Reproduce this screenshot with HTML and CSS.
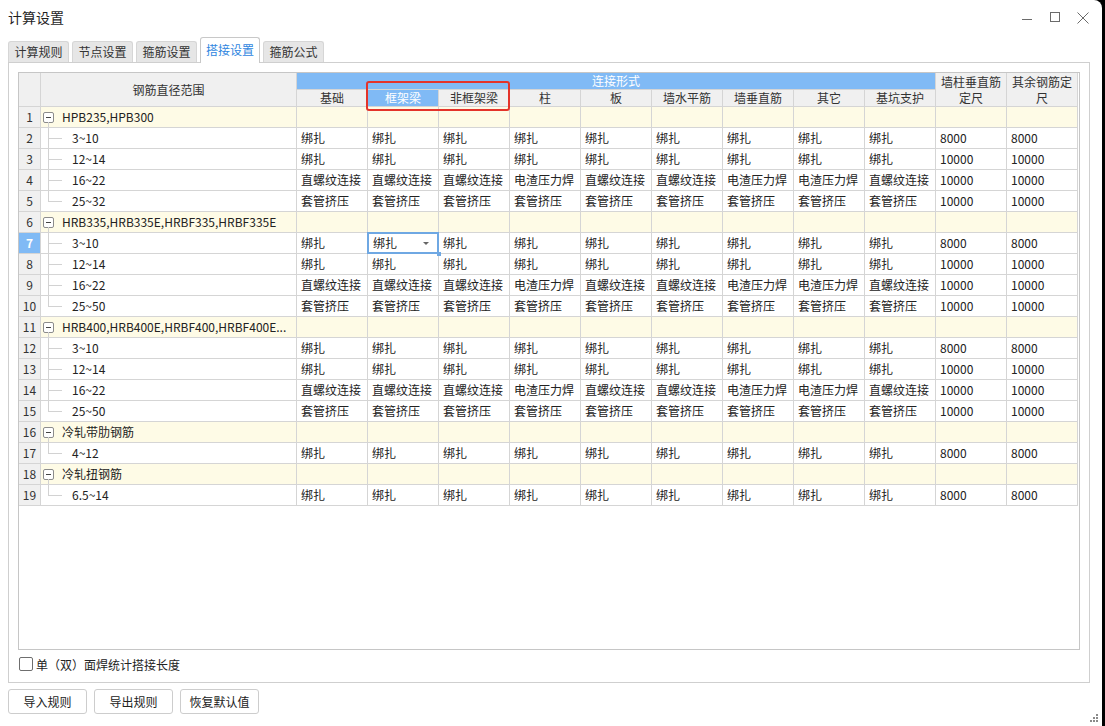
FILE: index.html
```html
<!DOCTYPE html>
<html lang="zh">
<head>
<meta charset="utf-8">
<title>计算设置</title>
<link rel="stylesheet" href="styles.css">
</head>
<body>
<div class="window">
  <div class="titlebar">
    <div class="title">计算设置</div>
    <div class="winctl">
      <svg class="ctl" width="28" height="34" viewBox="0 0 28 34"><line x1="9" y1="19.5" x2="19" y2="19.5" stroke="#6b6b6b"/></svg>
      <svg class="ctl" width="28" height="34" viewBox="0 0 28 34"><rect x="9.5" y="12.5" width="9" height="9" fill="none" stroke="#6b6b6b"/></svg>
      <svg class="ctl" width="28" height="34" viewBox="0 0 28 34"><path d="M8.5 12.5 L19.5 23.5 M19.5 12.5 L8.5 23.5" stroke="#6b6b6b" fill="none"/></svg>
    </div>
  </div>
  <div class="tabs">
    <div class="tab">计算规则</div>
    <div class="tab">节点设置</div>
    <div class="tab">箍筋设置</div>
    <div class="tab active">搭接设置</div>
    <div class="tab">箍筋公式</div>
  </div>
  <div class="panel">
    <div class="gridbox">
      <div class="sheet">
        <div class="h corner"></div>
        <div class="h range">钢筋直径范围</div>
        <div class="h blue span9">连接形式</div>
        <div class="h tall">墙柱垂直筋<br>定尺</div>
        <div class="h tall">其余钢筋定<br>尺</div>
        <div class="h sub">基础</div>
        <div class="h sub blue">框架梁</div>
        <div class="h sub">非框架梁</div>
        <div class="h sub">柱</div>
        <div class="h sub">板</div>
        <div class="h sub">墙水平筋</div>
        <div class="h sub">墙垂直筋</div>
        <div class="h sub">其它</div>
        <div class="h sub">基坑支护</div>

        <div class="row group"><div class="c n">1</div><div class="c name"><span class="tg"></span>HPB235,HPB300</div><div class="c"></div><div class="c"></div><div class="c"></div><div class="c"></div><div class="c"></div><div class="c"></div><div class="c"></div><div class="c"></div><div class="c"></div><div class="c"></div><div class="c"></div></div>
        <div class="row"><div class="c n">2</div><div class="c name child">3~10</div><div class="c">绑扎</div><div class="c">绑扎</div><div class="c">绑扎</div><div class="c">绑扎</div><div class="c">绑扎</div><div class="c">绑扎</div><div class="c">绑扎</div><div class="c">绑扎</div><div class="c">绑扎</div><div class="c">8000</div><div class="c">8000</div></div>
        <div class="row"><div class="c n">3</div><div class="c name child">12~14</div><div class="c">绑扎</div><div class="c">绑扎</div><div class="c">绑扎</div><div class="c">绑扎</div><div class="c">绑扎</div><div class="c">绑扎</div><div class="c">绑扎</div><div class="c">绑扎</div><div class="c">绑扎</div><div class="c">10000</div><div class="c">10000</div></div>
        <div class="row"><div class="c n">4</div><div class="c name child">16~22</div><div class="c">直螺纹连接</div><div class="c">直螺纹连接</div><div class="c">直螺纹连接</div><div class="c">电渣压力焊</div><div class="c">直螺纹连接</div><div class="c">直螺纹连接</div><div class="c">电渣压力焊</div><div class="c">电渣压力焊</div><div class="c">直螺纹连接</div><div class="c">10000</div><div class="c">10000</div></div>
        <div class="row"><div class="c n">5</div><div class="c name child last">25~32</div><div class="c">套管挤压</div><div class="c">套管挤压</div><div class="c">套管挤压</div><div class="c">套管挤压</div><div class="c">套管挤压</div><div class="c">套管挤压</div><div class="c">套管挤压</div><div class="c">套管挤压</div><div class="c">套管挤压</div><div class="c">10000</div><div class="c">10000</div></div>

        <div class="row group"><div class="c n">6</div><div class="c name"><span class="tg"></span>HRB335,HRB335E,HRBF335,HRBF335E</div><div class="c"></div><div class="c"></div><div class="c"></div><div class="c"></div><div class="c"></div><div class="c"></div><div class="c"></div><div class="c"></div><div class="c"></div><div class="c"></div><div class="c"></div></div>
        <div class="row"><div class="c n cur">7</div><div class="c name child">3~10</div><div class="c">绑扎</div><div class="c sel">绑扎<span class="dd"></span></div><div class="c">绑扎</div><div class="c">绑扎</div><div class="c">绑扎</div><div class="c">绑扎</div><div class="c">绑扎</div><div class="c">绑扎</div><div class="c">绑扎</div><div class="c">8000</div><div class="c">8000</div></div>
        <div class="row"><div class="c n">8</div><div class="c name child">12~14</div><div class="c">绑扎</div><div class="c">绑扎</div><div class="c">绑扎</div><div class="c">绑扎</div><div class="c">绑扎</div><div class="c">绑扎</div><div class="c">绑扎</div><div class="c">绑扎</div><div class="c">绑扎</div><div class="c">10000</div><div class="c">10000</div></div>
        <div class="row"><div class="c n">9</div><div class="c name child">16~22</div><div class="c">直螺纹连接</div><div class="c">直螺纹连接</div><div class="c">直螺纹连接</div><div class="c">电渣压力焊</div><div class="c">直螺纹连接</div><div class="c">直螺纹连接</div><div class="c">电渣压力焊</div><div class="c">电渣压力焊</div><div class="c">直螺纹连接</div><div class="c">10000</div><div class="c">10000</div></div>
        <div class="row"><div class="c n">10</div><div class="c name child last">25~50</div><div class="c">套管挤压</div><div class="c">套管挤压</div><div class="c">套管挤压</div><div class="c">套管挤压</div><div class="c">套管挤压</div><div class="c">套管挤压</div><div class="c">套管挤压</div><div class="c">套管挤压</div><div class="c">套管挤压</div><div class="c">10000</div><div class="c">10000</div></div>

        <div class="row group"><div class="c n">11</div><div class="c name"><span class="tg"></span>HRB400,HRB400E,HRBF400,HRBF400E...</div><div class="c"></div><div class="c"></div><div class="c"></div><div class="c"></div><div class="c"></div><div class="c"></div><div class="c"></div><div class="c"></div><div class="c"></div><div class="c"></div><div class="c"></div></div>
        <div class="row"><div class="c n">12</div><div class="c name child">3~10</div><div class="c">绑扎</div><div class="c">绑扎</div><div class="c">绑扎</div><div class="c">绑扎</div><div class="c">绑扎</div><div class="c">绑扎</div><div class="c">绑扎</div><div class="c">绑扎</div><div class="c">绑扎</div><div class="c">8000</div><div class="c">8000</div></div>
        <div class="row"><div class="c n">13</div><div class="c name child">12~14</div><div class="c">绑扎</div><div class="c">绑扎</div><div class="c">绑扎</div><div class="c">绑扎</div><div class="c">绑扎</div><div class="c">绑扎</div><div class="c">绑扎</div><div class="c">绑扎</div><div class="c">绑扎</div><div class="c">10000</div><div class="c">10000</div></div>
        <div class="row"><div class="c n">14</div><div class="c name child">16~22</div><div class="c">直螺纹连接</div><div class="c">直螺纹连接</div><div class="c">直螺纹连接</div><div class="c">电渣压力焊</div><div class="c">直螺纹连接</div><div class="c">直螺纹连接</div><div class="c">电渣压力焊</div><div class="c">电渣压力焊</div><div class="c">直螺纹连接</div><div class="c">10000</div><div class="c">10000</div></div>
        <div class="row"><div class="c n">15</div><div class="c name child last">25~50</div><div class="c">套管挤压</div><div class="c">套管挤压</div><div class="c">套管挤压</div><div class="c">套管挤压</div><div class="c">套管挤压</div><div class="c">套管挤压</div><div class="c">套管挤压</div><div class="c">套管挤压</div><div class="c">套管挤压</div><div class="c">10000</div><div class="c">10000</div></div>

        <div class="row group"><div class="c n">16</div><div class="c name"><span class="tg"></span>冷轧带肋钢筋</div><div class="c"></div><div class="c"></div><div class="c"></div><div class="c"></div><div class="c"></div><div class="c"></div><div class="c"></div><div class="c"></div><div class="c"></div><div class="c"></div><div class="c"></div></div>
        <div class="row"><div class="c n">17</div><div class="c name child last">4~12</div><div class="c">绑扎</div><div class="c">绑扎</div><div class="c">绑扎</div><div class="c">绑扎</div><div class="c">绑扎</div><div class="c">绑扎</div><div class="c">绑扎</div><div class="c">绑扎</div><div class="c">绑扎</div><div class="c">8000</div><div class="c">8000</div></div>

        <div class="row group"><div class="c n">18</div><div class="c name"><span class="tg"></span>冷轧扭钢筋</div><div class="c"></div><div class="c"></div><div class="c"></div><div class="c"></div><div class="c"></div><div class="c"></div><div class="c"></div><div class="c"></div><div class="c"></div><div class="c"></div><div class="c"></div></div>
        <div class="row"><div class="c n">19</div><div class="c name child last">6.5~14</div><div class="c">绑扎</div><div class="c">绑扎</div><div class="c">绑扎</div><div class="c">绑扎</div><div class="c">绑扎</div><div class="c">绑扎</div><div class="c">绑扎</div><div class="c">绑扎</div><div class="c">绑扎</div><div class="c">8000</div><div class="c">8000</div></div>
      </div>
      <div class="annot"></div>
    </div>
    <label class="opt"><span class="cb"></span>单（双）面焊统计搭接长度</label>
  </div>
  <div class="buttons">
    <div class="btn">导入规则</div>
    <div class="btn">导出规则</div>
    <div class="btn">恢复默认值</div>
  </div>
  <svg class="grip" width="9" height="9" viewBox="0 0 9 9"><rect x="6" y="0" width="2" height="2" fill="#8a8a8a"/><rect x="3" y="3" width="2" height="2" fill="#8a8a8a"/><rect x="6" y="3" width="2" height="2" fill="#8a8a8a"/><rect x="0" y="6" width="2" height="2" fill="#8a8a8a"/><rect x="3" y="6" width="2" height="2" fill="#8a8a8a"/><rect x="6" y="6" width="2" height="2" fill="#8a8a8a"/></svg>
</div>
</body>
</html>
```
FILE: styles.css
```css
html, body {
  margin: 0;
  height: 100%;
}
body {
  background: #000;
  font-family: "Noto Sans CJK SC", "Microsoft YaHei", sans-serif;
  font-size: 12px;
  color: #222;
}
.window {
  position: relative;
  width: 1102px;
  height: 726px;
  background: #fff;
  border-top-right-radius: 8px;
  display: flex;
  flex-direction: column;
  box-sizing: border-box;
}
.titlebar {
  height: 34px;
  display: flex;
  align-items: center;
  padding-left: 8px;
  padding-right: 5px;
}
.title {
  flex: 1;
  font-size: 14px;
  color: #1f1f1f;
}
.winctl {
  display: flex;
}
.ctl {
  display: block;
}
.tabs {
  height: 28px;
  display: flex;
  align-items: flex-end;
  gap: 3px;
  padding-left: 8px;
}
.tab {
  height: 21px;
  width: 61px;
  box-sizing: border-box;
  border: 1px solid #d6d6d6;
  border-bottom: none;
  border-radius: 3px 3px 0 0;
  background: #e6e6e6;
  color: #333;
  display: flex;
  align-items: center;
  justify-content: center;
  line-height: 1;
}
.tab.active {
  height: 26px;
  width: 60px;
  margin-bottom: -1px;
  background: #fff;
  border-color: #c8c8c8;
  color: #2f86e0;
  position: relative;
  z-index: 1;
  padding-bottom: 2px;
}
.panel {
  margin: 0 12px 0 8px;
  height: 621px;
  box-sizing: border-box;
  border: 1px solid #cfcfcf;
  padding: 9px 0 0 9px;
  display: flex;
  flex-direction: column;
}
.gridbox {
  position: relative;
  width: 1062px;
  height: 578px;
  box-sizing: border-box;
  border: 1px solid #c6c6c6;
  overflow: hidden;
  background: #fff;
}
.sheet {
  display: grid;
  grid-template-columns: 22px 256px repeat(11, 71px);
  grid-template-rows: 17px 17px;
  grid-auto-rows: 21px;
}
.row {
  display: contents;
}
.h, .c {
  box-sizing: border-box;
  border-right: 1px solid #d5d5d5;
  border-bottom: 1px solid #d5d5d5;
  white-space: nowrap;
  overflow: hidden;
}
.h {
  background: #f0f0f0;
  color: #333;
  display: flex;
  align-items: center;
  justify-content: center;
  text-align: center;
  line-height: 16px;
}
.corner { grid-row: 1 / 3; grid-column: 1; }
.range { grid-row: 1 / 3; grid-column: 2; }
.span9 { grid-column: 3 / 12; grid-row: 1; }
.tall { grid-row: 1 / 3; }
.sub { grid-row: 2; }
.h.blue {
  background: #80baf5;
  color: #fff;
}
.c {
  padding-left: 4px;
  line-height: 20px;
  color: #222;
  background: #fff;
}
.group .c {
  background: #fefbe6;
}
.c.n, .group .c.n {
  background: #f0f0f0;
  padding: 0;
  text-align: center;
  color: #333;
}
.c.n.cur {
  background: #80baf5;
  color: #fff;
  font-weight: bold;
}
.name {
  position: relative;
  padding-left: 2px;
}
.tg {
  display: inline-block;
  position: relative;
  width: 11px;
  height: 11px;
  box-sizing: border-box;
  border: 1px solid #8c8c8c;
  border-radius: 2px;
  vertical-align: -1px;
  margin-right: 8px;
  background: #fff;
}
.tg::after {
  content: "";
  position: absolute;
  left: 2px;
  top: 4px;
  width: 5px;
  height: 1px;
  background: #444;
}
.group .name::after {
  content: "";
  position: absolute;
  left: 7px;
  top: 15px;
  bottom: -1px;
  width: 1px;
  background: #d2d2d2;
}
.name.child {
  padding-left: 31px;
}
.name.child::before {
  content: "";
  position: absolute;
  left: 7px;
  top: 0;
  bottom: -1px;
  width: 1px;
  background: #d2d2d2;
}
.name.child.last::before {
  bottom: auto;
  height: 10px;
}
.name.child::after {
  content: "";
  position: absolute;
  left: 7px;
  top: 10px;
  width: 14px;
  height: 1px;
  background: #d2d2d2;
}
.c.sel {
  position: relative;
  overflow: visible;
  padding-left: 5px;
}
.c.sel::before {
  content: "";
  position: absolute;
  left: -1px;
  top: -1px;
  right: -1px;
  bottom: -1px;
  border: 2px solid #6fa8e3;
}
.c.sel::after {
  content: "";
  position: absolute;
  right: -3px;
  bottom: -3px;
  width: 4px;
  height: 4px;
  background: #6fa8e3;
  z-index: 2;
}
.dd {
  position: absolute;
  right: 9px;
  top: 9px;
  width: 0;
  height: 0;
  border-left: 3px solid transparent;
  border-right: 3px solid transparent;
  border-top: 3px solid #666;
}
.annot {
  position: absolute;
  left: 347px;
  top: 8px;
  width: 144px;
  height: 30px;
  box-sizing: border-box;
  border: 2px solid #e4332a;
  border-radius: 3px;
}
.opt {
  display: flex;
  align-items: center;
  gap: 3px;
  margin-top: 7px;
  margin-left: 1px;
  height: 14px;
  color: #222;
}
.cb {
  width: 14px;
  height: 14px;
  box-sizing: border-box;
  border: 1px solid #6e6e6e;
  border-radius: 2px;
  background: #fff;
}
.buttons {
  display: flex;
  gap: 7px;
  padding-left: 8px;
  margin-top: 6px;
}
.btn {
  width: 79px;
  height: 25px;
  box-sizing: border-box;
  border: 1px solid #cdcdcd;
  border-radius: 3px;
  background: #fff;
  display: flex;
  align-items: center;
  justify-content: center;
  color: #222;
}
.grip {
  position: absolute;
  right: 3px;
  bottom: 3px;
}
```
